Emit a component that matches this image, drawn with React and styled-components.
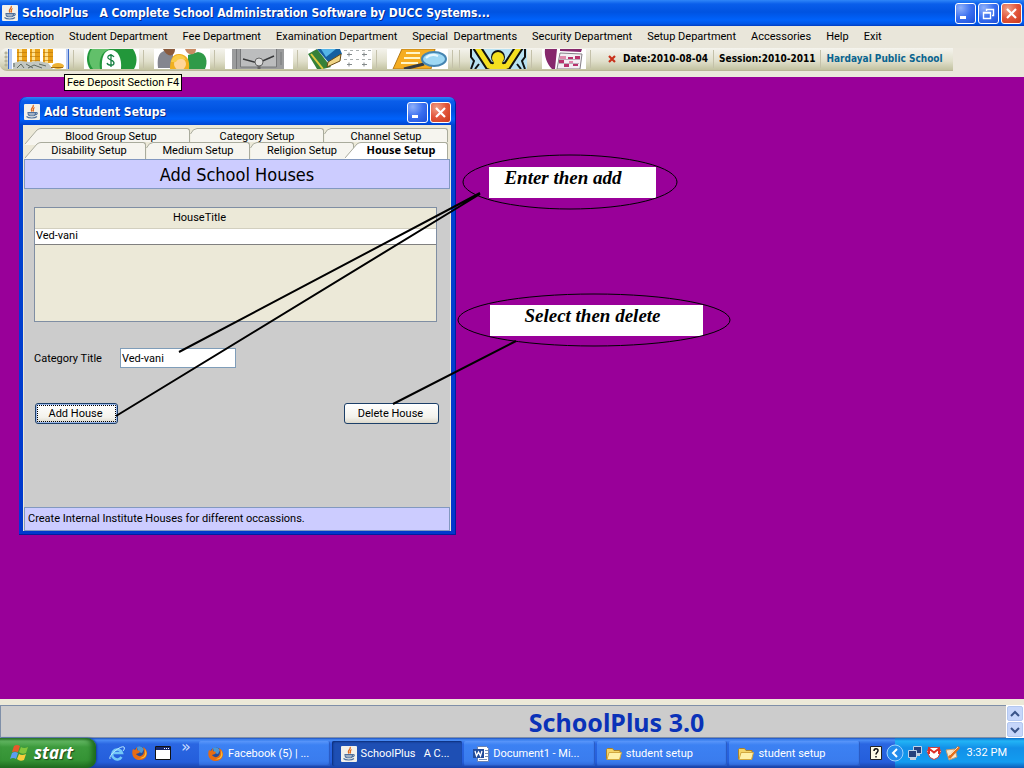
import React from "react";
import styled, { createGlobalStyle, css } from "styled-components";

const ui = 'Roboto, "Liberation Sans", sans-serif';
const wide = '"DejaVu Sans Condensed", "DejaVu Sans", sans-serif';
const humanist = '"Noto Sans", "Open Sans", sans-serif';

const Global = createGlobalStyle`
  * { box-sizing: border-box; }
  body { margin: 0; font: 11px/14px ${ui}; color: #000; background: #ece9d8; }
  button, input { font: inherit; color: inherit; }
  button { border: 0; padding: 0; background: none; cursor: default; }
  svg { display: block; flex: none; }
`;

const Screen = styled.div`
  position: relative;
  min-height: 100vh;
  display: flex;
  flex-direction: column;
`;

const TitleBar = styled.header`
  height: 26px;
  flex: none;
  display: flex;
  align-items: center;
  gap: 4px;
  padding: 0 2px 0 2px;
  background: linear-gradient(#2f86f8 0, #0a5eea 4px, #0053e1 12px, #0062fb 20px, #0055e5 24px, #003bc0 26px);
`;

const Caption = styled.h1`
  flex: 1;
  margin: 0;
  white-space: pre;
  font: bold 12px/16px ${wide};
  color: #fff;
  text-shadow: 1px 1px 0 #0a2a86;
`;

const WindowButton = styled.button`
  width: 21px;
  height: 21px;
  display: grid;
  place-items: center;
  border: 1px solid #fff;
  border-radius: 3px;
  background: ${(p) =>
    p.$close
      ? "radial-gradient(circle at 30% 25%, #f0a088, #e2553a 50%, #c8391c)"
      : "radial-gradient(circle at 25% 20%, #8fb0fa, #3a6ff0 50%, #1c4fd8)"};
`;

const WindowButtons = styled.div`
  display: flex;
  gap: 2px;
`;

const MenuBar = styled.nav`
  height: 22px;
  flex: none;
  display: flex;
  align-items: center;
  gap: 15px;
  padding: 0 5px;
  background: #e9e6da;
`;

const MenuItem = styled.button`
  white-space: pre;
`;

const ToolArea = styled.div`
  height: 29px;
  flex: none;
  display: flex;
  align-items: flex-start;
  background: #ebe7dc;
`;

const ToolBar = styled.div`
  height: 23px;
  display: flex;
  align-items: center;
  padding: 0 10px 0 4px;
  border-bottom: 1px solid #b9b698;
  border-radius: 7px 0 0 7px;
  background: linear-gradient(#f5f4ee, #e0dfcb 60%, #c2c2a0);
  font: bold 10px/14px ${wide};
  white-space: nowrap;
`;

const Grip = styled.i`
  width: 4px;
  height: 16px;
  background: radial-gradient(circle, #b5b29a 1px, transparent 2px) 0 0 / 4px 4px;
`;

const ToolButton = styled.button`
  height: 20px;
  ${(p) =>
    p.$active &&
    css`
      padding-right: 2px;
      border: solid #3a68c8;
      border-width: 0 1px;
      background: #b8ccf4;
    `}
`;

const ruleMargins = {
  tool: "0 10px 0 4px",
  first: "0 5px 0 4px",
  second: "0 10px 0 1px",
  text: "0 5px",
};

const Rule = styled.i`
  width: 1px;
  height: 18px;
  margin: ${(p) => ruleMargins[p.$kind]};
  background: #c4c1aa;
`;

const SchoolName = styled.span`
  color: #0a6490;
`;

const DateMark = styled.svg`
  margin: 0 6px;
`;

const Desktop = styled.main`
  position: relative;
  flex: 1;
  min-height: 480px;
  overflow: hidden;
  background: #990099;
`;

const Tooltip = styled.div`
  position: absolute;
  z-index: 3;
  left: 64px;
  top: 74px;
  padding: 1px 2px 0;
  border: 1px solid #000;
  background: #ffffe1;
  line-height: 14px;
`;

const Frame = styled.section`
  position: absolute;
  left: 19px;
  top: 20px;
  width: 437px;
  height: 438px;
  display: flex;
  flex-direction: column;
  padding: 0 5px 4px 4px;
  border-radius: 7px 7px 0 0;
  background: linear-gradient(#2f86f8 0, #0a5eea 4px, #0053e1 14px, #0062fb 22px, #0044d0 28px, #0038cc);
  box-shadow: inset -1px -1px 0 #001ea0, inset 1px 0 0 #0831d9;
`;

const FrameTitle = styled.div`
  height: 28px;
  flex: none;
  display: flex;
  align-items: center;
  gap: 4px;
  padding: 2px 0 0 1px;
`;

const FrameBody = styled.div`
  flex: 1;
  display: flex;
  flex-direction: column;
  padding: 3px 1px 0;
  background: #ece9d8;
`;

const TabRow = styled.div`
  height: ${(p) => (p.$front ? 17 : 14)}px;
  flex: none;
  display: flex;
  padding: 0 2px 0 1px;
`;

const TabButton = styled.button`
  display: flex;
  flex: 0 0 auto;
  width: ${(p) => p.$w}px;
  margin-left: ${(p) => (p.$selected ? -9 : 0)}px;
  font: ${(p) => (p.$selected ? `bold 11px/14px ${humanist}` : "inherit")};
  white-space: nowrap;
`;

const TabFace = styled.span`
  flex: 1;
  height: 100%;
  padding-right: ${(p) => (p.$wide ? 8 : 6)}px;
  border: solid #a9ab9c;
  border-width: 1px 1px 0 0;
  border-radius: 0 3px 0 0;
  background: ${(p) => (p.$selected ? "#fff" : "#f6f5ef")};
  text-align: center;
  line-height: ${(p) => (p.$selected ? 14 : 16)}px;
`;

const Panel = styled.div`
  flex: 1;
  display: flex;
  flex-direction: column;
  background: #cccccc;
`;

const Heading = styled.h2`
  height: 30px;
  margin: 0;
  border: 1px solid #8298c0;
  background: #ccccff;
  text-align: center;
  font: 18px/29px ${wide};
`;

const Form = styled.form`
  flex: 1;
  display: flex;
  flex-direction: column;
  padding: 18px 11px 0 10px;
`;

const TableBox = styled.div`
  height: 115px;
  margin-right: 2px;
  border: 1px solid #7f8ea3;
  background: #ece9d8;
`;

const Table = styled.table`
  width: 100%;
  border-collapse: collapse;
  th {
    height: 20px;
    padding: 1px 72px 0 0;
    font-weight: normal;
    border-bottom: 1px solid #d2cfbf;
  }
  td {
    height: 16px;
    padding: 0 1px;
    background: #fff;
    border-bottom: 1px solid #808080;
  }
`;

const FieldRow = styled.div`
  display: flex;
  align-items: center;
  margin-top: 26px;
`;

const FieldLabel = styled.label`
  width: 86px;
  padding-top: 1px;
`;

const Field = styled.input`
  width: 116px;
  height: 20px;
  padding: 0 1px;
  border: 1px solid #7f9db9;
  background: #fff;
  outline: 0;
`;

const Buttons = styled.div`
  display: flex;
  justify-content: space-between;
  margin-top: 35px;
  padding-left: 1px;
`;

const PushButton = styled.button`
  width: ${(p) => p.$w}px;
  height: 21px;
  padding-right: 2px;
  border: 1px solid #1c3f68;
  border-radius: 3px;
  background: linear-gradient(#fff, #f3f2ec 70%, #dcd8cb);
  ${(p) =>
    p.$focused &&
    css`
      box-shadow: inset 0 0 0 1px #9db8ea;
      outline: 1px dotted #000;
      outline-offset: -3px;
    `}
`;

const Status = styled.footer`
  height: 24px;
  padding: 0 3px;
  border: 1px solid #8298c0;
  background: #ccccff;
  line-height: 21px;
`;

const Callout = styled.p`
  position: absolute;
  left: ${(p) => p.$x}px;
  top: ${(p) => p.$y}px;
  width: ${(p) => p.$w}px;
  height: 31px;
  margin: 0;
  padding-right: ${(p) => p.$shift}px;
  background: #fff;
  text-align: center;
  font: italic bold 19px/22px "Liberation Serif", serif;
`;

const Arrows = styled.svg`
  position: absolute;
  left: 0;
  top: 0;
  pointer-events: none;
`;

const Brand = styled.section`
  height: 39px;
  flex: none;
  display: flex;
  padding-top: 6px;
  background: #ece9d8;
`;

const BrandName = styled.div`
  flex: 1;
  padding-left: 226px;
  border: 1px solid #7f8fa8;
  border-right: 0;
  background: #cccccc;
  text-align: center;
  color: #0a32b8;
  font: bold 25px/32px ${humanist};
`;

const Scroller = styled.div`
  width: 18px;
  display: flex;
  flex-direction: column;
  gap: 1px;
  padding: 1px;
  background: #fff;
`;

const ScrollButton = styled.button`
  flex: 1;
  display: grid;
  place-items: center;
  border: 1px solid #b4c8f0;
  border-radius: 2px;
  background: #c6d6fa;
`;

const TaskBar = styled.footer`
  height: 30px;
  flex: none;
  display: flex;
  background: linear-gradient(#1c50c0 0, #4a8df5 2px, #2a66e2 6px, #245edb 24px, #1941a5 30px);
  color: #fff;
`;

const Start = styled.button`
  width: 96px;
  display: flex;
  align-items: center;
  gap: 5px;
  padding: 0 0 0 10px;
  border-radius: 0 9px 9px 0;
  background: linear-gradient(#2c7a2c 0, #63b863 3px, #3c9a3c 9px, #359335 22px, #226e22 30px);
  box-shadow: inset -4px 0 5px #1d6a1d, 1px 0 2px #123c9c;
  color: #fff;
  font: italic bold 17px/26px "Open Sans", sans-serif;
  text-shadow: 1px 1px 1px #1a441a;
`;

const Quick = styled.div`
  width: 102px;
  display: flex;
  align-items: center;
  gap: 7px;
  padding-left: 13px;
`;

const More = styled.span`
  align-self: flex-start;
  margin-left: 3px;
  font: 16px/18px "DejaVu Sans", sans-serif;
  color: #c8dcff;
`;

const Tasks = styled.div`
  display: flex;
  flex: 1;
  gap: 2px;
  padding: 3px 10px 2px 1px;
`;

const Task = styled.button`
  flex: 0 1 131px;
  display: flex;
  align-items: center;
  gap: 4px;
  padding-left: 9px;
  border-radius: 2px;
  white-space: pre;
  overflow: hidden;
  background: ${(p) => (p.$open ? "#1e4fb4" : "linear-gradient(#5a96fa, #3c81f3 4px, #3a7cee 20px, #2f68d8)")};
  box-shadow: ${(p) => (p.$open ? "inset 1px 1px 2px #0c2d78" : "inset -1px -1px 1px #2858c0")};
`;

const HelpButton = styled.button`
  margin-right: 13px;
`;

const Tray = styled.div`
  display: flex;
  align-items: center;
  gap: 3px;
  width: 129px;
  flex: none;
  padding-right: 17px;
  background: linear-gradient(#0e70cc 0, #22b4f6 3px, #1290e8 10px, #129cf0 24px, #0c5cb8 30px);
`;

const Collapse = styled.button`
  margin-left: -9px;
`;

const Clock = styled.time`
  margin-left: auto;
  white-space: nowrap;
`;

const Java = () => (
  <svg width="16" height="16">
    <rect width="16" height="16" rx="1" fill="#f2f0ea" />
    <path d="M9 1C11 3 5.500 4 8 7.500M10.500 3.500C8 5 10.500 5.500 9 7.500" fill="none" stroke="#e06a20" strokeWidth="1.300" />
    <path d="M4 8.500h7.500c0 2-.6 3.200-1.500 3.200H6C5 11.700 4 10.500 4 8.500zM11.500 8.800c2.500-.8 2.500 2-1 2.200M2.500 12.500c2 2 8.500 2 10.500 0" fill="none" stroke="#4d6f9c" strokeWidth="1.100" />
    <path d="M5 10h6" stroke="#4d6f9c" />
  </svg>
);

const Minimize = () => (
  <svg width="15" height="15"><path d="M2 11.500h6" stroke="#fff" strokeWidth="3" /></svg>
);
const Restore = () => (
  <svg width="15" height="15"><path d="M5.500 5V3.500h7v6H11M2.500 6.500h7v6h-7zM2 7h8M5 3.500h8" fill="none" stroke="#fff" strokeWidth="1.400" /></svg>
);
const Close = () => (
  <svg width="15" height="15"><path d="M3 3l9 9M12 3l-9 9" stroke="#fff" strokeWidth="2.200" /></svg>
);

const Coins = () => (
  <svg width="57" height="20">
    <path fill="#fff" d="M3 0h54v20H3z" />
    {[8, 21, 34].map((x) => (
      <g key={x}>
        <path fill="#e8a018" d={`M${x} 0h10v14h-10z`} />
        <path fill="#ffe08c" d={`M${x + 2} 0h3v14h-3z`} />
        <path stroke="#b87408" strokeOpacity=".6" d={`M${x} 3.500h10m-10 4h10m-10 4h10`} />
      </g>
    ))}
    <path fill="#c3c8c3" d="M4 14l8-2 8 1 9-1 10 2 5 6H4z" />
    <path stroke="#5f6a62" fill="none" d="M5 14v4m3 1l4-4 3 4m2-4l7 4m-5 0l6-3 8 3m-3-4l7 2" />
    <ellipse cx="49" cy="17" rx="6" ry="3" fill="#edb234" />
    <path stroke="#a06a10" d="M42 18.500h12" />
  </svg>
);

const Dollar = () => (
  <svg width="55" height="20">
    <path fill="#fff" d="M0 0h55v20H0z" />
    <path fill="#22973a" d="M6 0h43c5 7 4 15 1 20H6C2 14 2 6 6 0z" />
    <path fill="#62c06a" d="M8 0h18C16 3 15 12 16 20H9C4 14 4 5 8 0z" />
    <path fill="#fff" d="M27 1c7 0 11 8 10 19H18C17 9 20 1 27 1z" />
    <path d="M30 8c-2-3-7-2-6 1 1 2 6 2 6 5s-6 3-7 0M27 5v13" fill="none" stroke="#198044" strokeWidth="1.300" />
  </svg>
);

const People = () => (
  <svg width="56" height="20">
    <path fill="#fff" d="M0 0h56v20H0z" />
    <path fill="#84868f" d="M4 19C3 10 4 4 10 2l9 3v14z" />
    <path fill="#8a5a3c" d="M9 0h12c0 8-8 9-12 0z" />
    <path fill="#2f9a48" d="M34 6l10-3c9 1 10 10 7 17H34z" />
    <path fill="#c98b62" d="M31 0h11c0 7-9 7-11 0z" />
    <path fill="#f0b020" d="M16 20c0-10 3-16 10-15s10 6 9 15z" />
    <ellipse cx="26" cy="15" rx="6" ry="6" fill="#ffd69a" />
    <path fill="#f8cc48" d="M17 13c2-9 13-9 15-2q-8-3-10 2z" />
  </svg>
);

const Safe = () => (
  <svg width="68" height="20">
    <path fill="#fff" d="M0 0h68v20H0z" />
    <path fill="#9b9c9d" d="M7 0h52v20H7z" />
    <path fill="#bcbdbe" d="M15 0h36v18H15z" />
    <path stroke="#77787a" d="M15.500 0v18h36V0M11.500 0v20M56 3v13" fill="none" />
    <path d="M18 10l15 4 16-7" stroke="#37383a" strokeWidth="1.500" fill="none" />
    <path d="M34 14v6" stroke="#666" strokeWidth="3" />
    <circle cx="34" cy="13" r="4" fill="#ddd" stroke="#666" />
  </svg>
);

const Books = () => (
  <svg width="64" height="20">
    <path fill="#fff" d="M0 0h64v20H0z" />
    <path fill="#368139" d="M0 5L9 0l14 18-8 2H9z" />
    <path stroke="#e1cb40" strokeWidth="2" d="M3 5l12 15" />
    <path fill="#155fa0" d="M9 0h23l2 5-13 9z" />
    <path fill="#54b4e8" d="M13 0h15L18 8z" />
    <path fill="#f0d585" stroke="#6a4b14" d="M20 13l13-8-1 7-13 6z" />
    {[41, 56].map((x) => (
      <path key={x} d={`M${x - 2} 5.500h5m-3-2v4M${x - 2} 15.500h5m-3-2v4`} stroke="#83898a" fill="none" />
    ))}
    <path d="M36 1.500h28M36 10.500h28" stroke="#a9aeae" strokeDasharray="3 3" />
  </svg>
);

const Search = () => (
  <svg width="61" height="20">
    <path fill="#fff" d="M0 0h61v20H0z" />
    <path fill="#f5ad21" stroke="#b37817" d="M15 0h33l-4 20H6z" />
    <path stroke="#fff5c8" strokeWidth="2" d="M19 4h14M17 9h16M14 14h17" />
    <path stroke="#343b44" strokeWidth="3" d="M37 15L17 20" />
    <ellipse cx="47" cy="10" rx="12" ry="7" fill="#9ed8f4" stroke="#4685b1" strokeWidth="2" />
    <path d="M39 9q5-5 12-2" fill="none" stroke="#e7f8ff" strokeWidth="2" />
  </svg>
);

const Dancer = () => (
  <svg width="57" height="20">
    <path fill="#b9e2f2" d="M0 0h57v20H0z" />
    <path d="M1 0v8l3 4-3 8M55 0v8l-3 4 3 8M9 15l-4 5M47 15l4 5" fill="none" stroke="#111" strokeWidth="2" />
    <path d="M6-3L19 17L28 19L37 17L50-3" fill="none" stroke="#111" strokeWidth="9" />
    <circle cx="28" cy="8" r="7" fill="#111" />
    <path d="M6-3L19 17L28 19L37 17L50-3" fill="none" stroke="#f5e020" strokeWidth="5" />
    <circle cx="28" cy="9" r="6" fill="#f5e020" />
    <path d="M19 20l6-7h6l6 7z" fill="#f5e020" />
  </svg>
);

const Calendar = () => (
  <svg width="44" height="20">
    <path fill="#fff" d="M0 0h44v20H0z" />
    <path fill="#86286c" d="M3 0h12l-2 20H10C5 15 2 7 3 0zM18 0h22l-1 3-21-1z" />
    <path fill="#f4eff3" stroke="#858087" d="M18 4l22 1-2 15H15z" />
    <path fill="#b8326c" d="M26 8h5v3h-5zM33 7h5v4h-5zM17 11h5v3h-5zM22 14h5v4h-5zM31 14h5v3h-5z" />
    <path fill="#e08aac" d="M18 7h6v3h-6zM27 12h4v3h-4z" />
    <path stroke="#bdaeba" d="M17 10.500h21M16 14.500h21" />
  </svg>
);

const Flag = () => (
  <svg width="19" height="20">
    <path fill="#e8582b" d="M4 3q3-2 6 0L8 9q-3-1-6 0z" />
    <path fill="#82c63d" d="M11 4q3 2 7 0l-2 6q-4 2-7-1z" />
    <path fill="#5b9df0" d="M2 10q3-2 6 0l-2 6q-3-2-6 0z" />
    <path fill="#f7cd3c" d="M9 11q3 2 7 0l-2 6q-4 2-7-1z" />
  </svg>
);

const Explorer = () => (
  <svg width="16" height="18">
    <path d="M12.500 13a5 5 0 1 1 .5-4H4" fill="none" stroke="#73c7f7" strokeWidth="2.500" />
    <path d="M1 15C-1 11 12 1 15 3c1 1 0 3-1 4" fill="none" stroke="#b9e7ff" />
  </svg>
);

const Firefox = () => (
  <svg width="16" height="16">
    <circle cx="8" cy="8" r="6.500" fill="#254c9b" />
    <path fill="#4b96d6" d="M5 2q4-2 7 2l-2 4-4-1z" />
    <path fill="#e66c14" d="M1 4l2 1 2-3v3l3 1-1 2-3 1c3 4 8 2 8-3l-1-4c7 4 4 13-3 13C1 15-1 9 1 4z" />
    <path fill="#fac237" d="M13 4c4 6-1 11-6 9 5 0 7-3 6-9z" />
  </svg>
);

const ShowWindow = () => (
  <svg width="16" height="14"><path fill="#fff" stroke="#111" d="M.5.5h15v13H.5z" /><path fill="#17296e" d="M1 1h14v3H1z" /><path stroke="#fff" d="M9 2.500h1m1 0h1m1 0h1" /></svg>
);

const Word = () => (
  <svg width="16" height="16">
    <path fill="#fff" stroke="#6c83b0" d="M4.500.5h9l2 2v13h-11z" />
    <path stroke="#7590bd" d="M12 4.500h3M12 7.500h3M12 10.500h3M6 13.500h8" />
    <path fill="#234c9b" d="M0 3h11v9H0z" />
    <path d="M2 5l1.500 5L5.500 6l2 4L9 5" fill="none" stroke="#fff" strokeWidth="1.300" />
  </svg>
);

const Folder = () => (
  <svg width="16" height="14">
    <path fill="#f4d468" stroke="#aa812b" d="M.5 12V2.500l1-1h5l1.500 2h6V12z" />
    <path fill="#fff0a8" stroke="#d2a840" d="M1 12.500L3 5.500h12.500l-2 7z" />
  </svg>
);

const HelpBadge = () => (
  <svg width="12" height="14">
    <path fill="#fffde6" stroke="#222" d="M.5.5h11v13H.5z" />
    <path d="M4 5c0-3 4-3 4-.5C8 6.500 6 6.500 6 8.500M6 10v1.500" fill="none" stroke="#111" strokeWidth="1.500" />
  </svg>
);

const CollapseIcon = () => (
  <svg width="18" height="18">
    <circle cx="9" cy="9" r="8" fill="#248cec" stroke="#9cd3ff" />
    <path d="M11 5L7 9l4 4" fill="none" stroke="#fff" strokeWidth="2" />
  </svg>
);
const Network = () => (
  <svg width="16" height="16">
    <path fill="#26407c" stroke="#bfd3ea" d="M6.500 1.500h8v7h-8z" />
    <path fill="#c6cfdd" d="M9 9h4v2H9zM3 13h6v2H3z" />
    <path fill="#26407c" stroke="#bfd3ea" d="M1.500 5.500h8v7h-8z" />
  </svg>
);
const Mail = () => (
  <svg width="16" height="16">
    <path fill="#fff" stroke="#c44" d="M3 2.500h10l2 4-3 6-4 2-4-2-3-6z" />
    <path d="M3 9V3.500l5 4 5-4V9" fill="none" stroke="#dd3027" strokeWidth="2" />
  </svg>
);
const Pen = () => (
  <svg width="16" height="16">
    <path fill="#f7e7cc" stroke="#c39b6d" d="M1 5l9-1 2 8-8 3z" />
    <path stroke="#e4701c" strokeWidth="3" d="M4 13L14 2" />
    <path stroke="#ffd9b0" d="M5 10l8-8" />
  </svg>
);

const Chevron = ({ up }) => (
  <svg width="10" height="8"><path d={up ? "M1 6l4-4 4 4" : "M1 2l4 4 4-4"} fill="none" stroke="#3a5488" strokeWidth="2" /></svg>
);

const Tab = ({ w, slant, selected, children }) => (
  <TabButton type="button" role="tab" aria-selected={!!selected} $w={w} $selected={selected}>
    <svg width={slant ? 16 : 7} height="17">
      <path
        d={slant ? "M0 16L12 2Q14 .5 16 .5V17H0z" : "M.5 17V6Q3 .5 7 .5V17z"}
        fill={selected ? "#fff" : "#f6f5ef"}
      />
      <path d={slant ? "M0 16L12 2Q14 .5 16 .5" : "M.5 6Q3 .5 7 .5"} fill="none" stroke="#a9ab9c" />
    </svg>
    <TabFace $selected={selected} $wide={slant && !selected}>{children}</TabFace>
  </TabButton>
);

const menus = [
  "Reception", "Student Department", "Fee Department", "Examination Department",
  "Special  Departments", "Security Department", "Setup Department", "Accessories", "Help", "Exit",
];

const tools = [
  ["Fees", Coins], ["Payments", Dollar], ["People", People], ["Safe", Safe],
  ["Library", Books], ["Search", Search], ["Activities", Dancer], ["Calendar", Calendar],
];

export default function App() {
  return (
    <Screen>
      <Global />
      <TitleBar>
        <Java />
        <Caption>{"SchoolPlus   A Complete School Administration Software by DUCC Systems..."}</Caption>
        <WindowButtons>
          <WindowButton aria-label="Minimize"><Minimize /></WindowButton>
          <WindowButton aria-label="Restore"><Restore /></WindowButton>
          <WindowButton $close aria-label="Close"><Close /></WindowButton>
        </WindowButtons>
      </TitleBar>
      <MenuBar>
        {menus.map((m) => <MenuItem key={m}>{m}</MenuItem>)}
      </MenuBar>
      <ToolArea>
        <ToolBar>
          <Grip />
          {tools.map(([name, Icon], i) => (
            <React.Fragment key={name}>
              <ToolButton aria-label={name} $active={i === 0}><Icon /></ToolButton>
              <Rule $kind={i === 5 ? "first" : "tool"} />
              {i === 5 && <Rule $kind="second" />}
            </React.Fragment>
          ))}
          <DateMark width="10" height="10"><path d="M2 2l6 6M8 2L2 8" stroke="#c8321c" strokeWidth="2.200" /></DateMark>
          <span>Date:2010-08-04</span>
          <Rule $kind="text" />
          <span>Session:2010-2011</span>
          <Rule $kind="text" />
          <SchoolName>Hardayal Public School</SchoolName>
        </ToolBar>
      </ToolArea>
      <Tooltip role="tooltip">Fee Deposit Section F4</Tooltip>

      <Desktop>
        <Frame>
          <FrameTitle>
            <Java />
            <Caption as="h2">Add Student Setups</Caption>
            <WindowButtons>
              <WindowButton aria-label="Minimize"><Minimize /></WindowButton>
              <WindowButton $close aria-label="Close"><Close /></WindowButton>
            </WindowButtons>
          </FrameTitle>
          <FrameBody>
            <TabRow role="tablist">
              <Tab w={165} slant>Blood Group Setup</Tab>
              <Tab w={134}>Category Setup</Tab>
              <Tab w={124}>Channel Setup</Tab>
            </TabRow>
            <TabRow role="tablist" $front>
              <Tab w={121} slant>Disability Setup</Tab>
              <Tab w={104}>Medium Setup</Tab>
              <Tab w={104}>Religion Setup</Tab>
              <Tab w={103} slant selected>House Setup</Tab>
            </TabRow>
            <Panel>
              <Heading>Add School Houses</Heading>
              <Form onSubmit={(e) => e.preventDefault()}>
                <TableBox>
                  <Table>
                    <thead><tr><th>HouseTitle</th></tr></thead>
                    <tbody><tr><td>Ved-vani</td></tr></tbody>
                  </Table>
                </TableBox>
                <FieldRow>
                  <FieldLabel htmlFor="title">Category Title</FieldLabel>
                  <Field id="title" defaultValue="Ved-vani" />
                </FieldRow>
                <Buttons>
                  <PushButton $w={83} $focused>Add House</PushButton>
                  <PushButton type="button" $w={95}>Delete House</PushButton>
                </Buttons>
              </Form>
              <Status>Create Internal Institute Houses for different occassions.</Status>
            </Panel>
          </FrameBody>
        </Frame>

        <Callout $x={489} $y={90} $w={167} $shift={19}>Enter then add</Callout>
        <Callout $x={490} $y={228} $w={213} $shift={8}>Select then delete</Callout>
        <Arrows width="740" height="360">
          <g fill="none" stroke="#000">
            <ellipse cx="570" cy="105" rx="107" ry="27" />
            <ellipse cx="594" cy="243" rx="136" ry="26" />
            <path strokeWidth="2" d="M480 116L179 275M480 117L116 339M516 264L393 327" />
          </g>
        </Arrows>
      </Desktop>

      <Brand>
        <BrandName>SchoolPlus 3.0</BrandName>
        <Scroller>
          <ScrollButton aria-label="Scroll up"><Chevron up /></ScrollButton>
          <ScrollButton aria-label="Scroll down"><Chevron /></ScrollButton>
        </Scroller>
      </Brand>
      <TaskBar>
        <Start><Flag />start</Start>
        <Quick>
          <Explorer /><Firefox /><ShowWindow /><More>»</More>
        </Quick>
        <Tasks>
          <Task><Firefox />Facebook (5) | ...</Task>
          <Task $open><Java />{"SchoolPlus   A C..."}</Task>
          <Task><Word />Document1 - Mi...</Task>
          <Task><Folder />student setup</Task>
          <Task><Folder />student setup</Task>
        </Tasks>
        <HelpButton aria-label="Help"><HelpBadge /></HelpButton>
        <Tray>
          <Collapse aria-label="Hide icons"><CollapseIcon /></Collapse>
          <Network /><Mail /><Pen />
          <Clock>3:32 PM</Clock>
        </Tray>
      </TaskBar>
    </Screen>
  );
}
